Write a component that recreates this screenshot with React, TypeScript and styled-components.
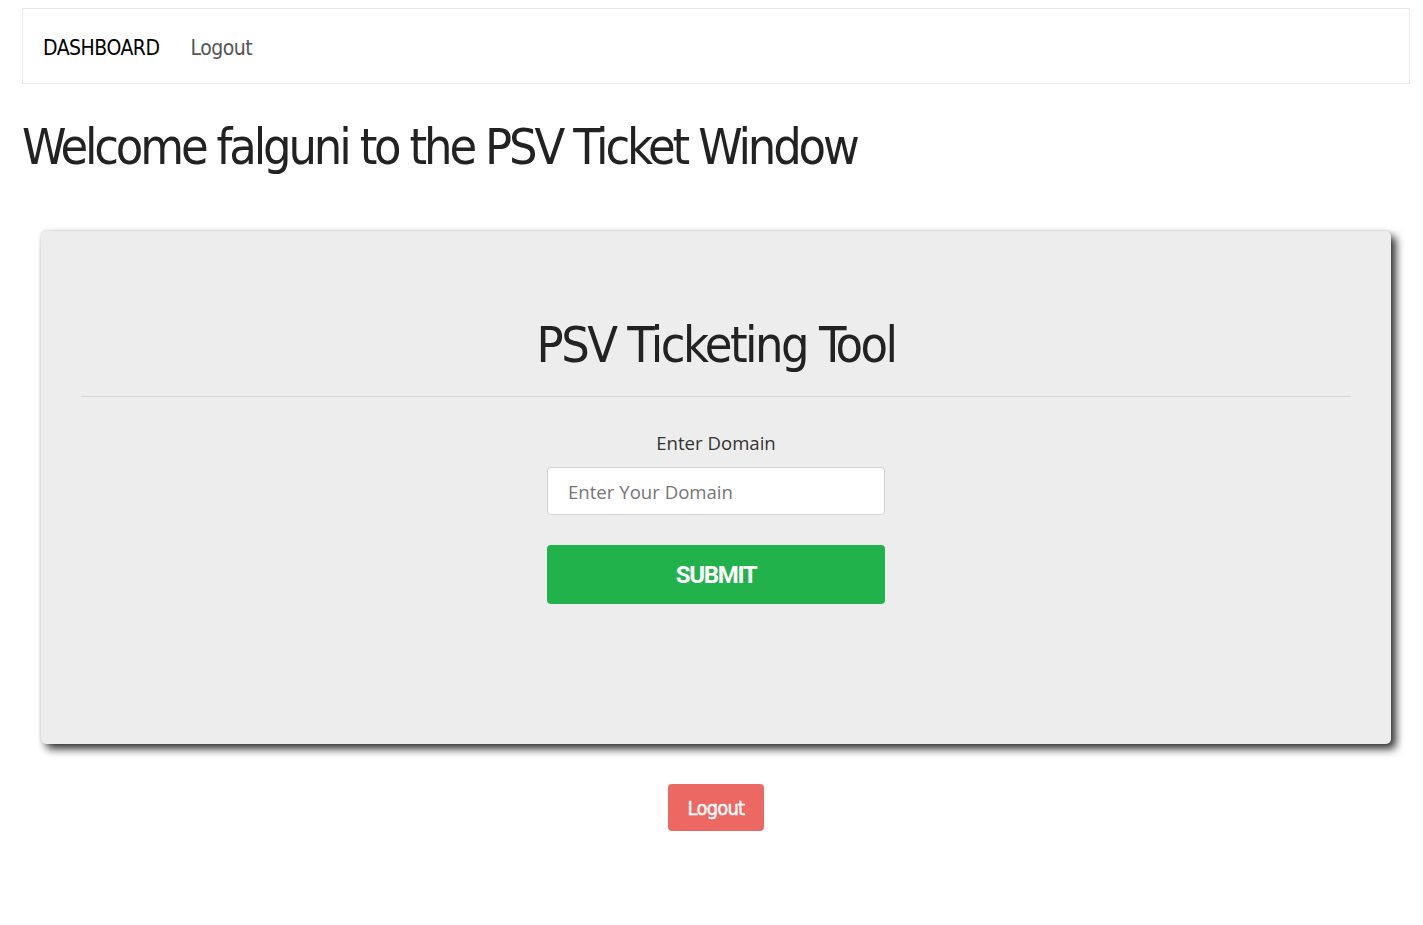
import React from "react";
import styled, { createGlobalStyle } from "styled-components";

const Global = createGlobalStyle`
  body {
    margin: 8px;
    background: #ffffff;
    font-family: "DejaVu Sans Condensed", "Liberation Sans", sans-serif;
  }
  * { box-sizing: border-box; }
`;

const Page = styled.div`
  padding: 0 5px 0 14px;
  display: flex;
  flex-direction: column;
`;

const Nav = styled.nav`
  height: 76px;
  border: 1px solid #e9e9e9;
  display: flex;
  align-items: center;
  padding: 0 20px;
  gap: 31px;
`;

const NavLink = styled.a<{ $strong?: boolean }>`
  font-size: 21px;
  letter-spacing: -0.5px;
  color: ${(p) => (p.$strong ? "#000000" : "#555555")};
  text-decoration: none;
  cursor: pointer;
  padding-top: 4px;
`;

const Title = styled.h1`
  margin: 31px 0 0;
  font-size: 50px;
  letter-spacing: -3.15px;
  font-weight: 400;
  color: #222;
  line-height: 64px;
`;

const Card = styled.section`
  margin: 52px 19px 0;
  height: 513px;
  background: #ededed;
  border-radius: 5px;
  box-shadow: 5px 5px 8px rgba(0, 0, 0, 0.8), 0 0 3px rgba(0, 0, 0, 0.15);
  padding: 0 40px;
  display: flex;
  flex-direction: column;
  align-items: center;
`;

const CardTitle = styled.h2`
  margin: 82px 0 0;
  font-size: 50px;
  letter-spacing: -2.5px;
  font-weight: 400;
  color: #222;
  line-height: 64px;
`;

const Rule = styled.hr`
  align-self: stretch;
  margin: 19px 0 0;
  border: none;
  border-top: 1px solid #d6d6d6;
`;

const Form = styled.form`
  display: flex;
  flex-direction: column;
  align-items: center;
  width: 338px;
`;

const Label = styled.label`
  margin-top: 34px;
  font-family: "Open Sans", "Noto Sans", sans-serif;
  font-size: 18.6px;
  color: #333;
  line-height: 24px;
`;

const Input = styled.input`
  margin-top: 12px;
  width: 338px;
  height: 48px;
  border: 1px solid #cfd2d6;
  border-radius: 4px;
  background: #fff;
  padding: 0 20px;
  font-family: "Open Sans", "Noto Sans", sans-serif;
  font-size: 18.6px;
  color: #333;
  outline: none;
  &::placeholder { color: #767676; }
`;

const Submit = styled.button`
  margin-top: 30px;
  width: 338px;
  height: 59px;
  border: none;
  border-radius: 4px;
  background: #22b24c;
  color: #fff;
  font-family: "Roboto", sans-serif;
  font-weight: 700;
  font-size: 24px;
  letter-spacing: -1.3px;
  cursor: pointer;
`;

const Footer = styled.div`
  display: flex;
  justify-content: center;
  margin-top: 40px;
`;

const LogoutButton = styled.button`
  width: 96px;
  height: 47px;
  border: none;
  border-radius: 4px;
  background: #ec6863;
  color: #fff;
  font-family: "DejaVu Sans Condensed", sans-serif;
  font-size: 20px;
  letter-spacing: -0.8px;
  cursor: pointer;
  -webkit-text-stroke: 0.4px #fff;
`;

export default function App() {
  return (
    <>
      <Global />
      <Page>
        <Nav>
          <NavLink $strong>DASHBOARD</NavLink>
          <NavLink>Logout</NavLink>
        </Nav>
        <Title>Welcome falguni to the PSV Ticket Window</Title>
        <Card>
          <CardTitle>PSV Ticketing Tool</CardTitle>
          <Rule />
          <Form onSubmit={(e) => e.preventDefault()}>
            <Label htmlFor="domain">Enter Domain</Label>
            <Input id="domain" placeholder="Enter Your Domain" />
            <Submit type="submit">SUBMIT</Submit>
          </Form>
        </Card>
        <Footer>
          <LogoutButton>Logout</LogoutButton>
        </Footer>
      </Page>
    </>
  );
}
